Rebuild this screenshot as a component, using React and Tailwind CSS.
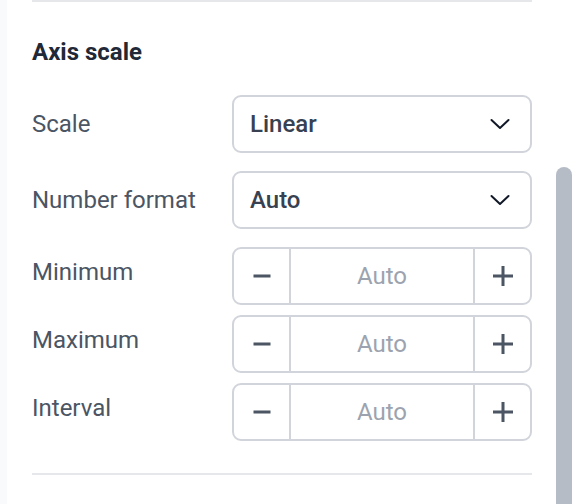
import React from "react";

function Chevron() {
  return (
    <svg width="20" height="12" viewBox="0 0 20 12" fill="none" className="shrink-0">
      <polyline points="1.5,2 10,10 18.5,2" stroke="#111827" strokeWidth="2" strokeLinecap="round" strokeLinejoin="round" />
    </svg>
  );
}

function Select({ value }) {
  return (
    <div className="flex h-[58px] w-[300px] items-center justify-between rounded-[9px] border-2 border-[#d1d5db] bg-white pl-[16px] pr-[20px]">
      <span className="text-[24px] font-medium leading-[36px] text-[#374151]">{value}</span>
      <Chevron />
    </div>
  );
}

function Stepper() {
  return (
    <div className="flex h-[58px] w-[300px] rounded-[9px] border-2 border-[#d1d5db] bg-white">
      <div className="flex w-[57px] items-center justify-center border-r-2 border-[#d1d5db]">
        <svg width="18" height="4" viewBox="0 0 18 4">
          <rect x="0.5" y="0.5" width="17" height="3" fill="#4b5563" />
        </svg>
      </div>
      <div className="flex flex-1 items-center justify-center text-[24px] leading-[36px] text-[#9ca3af]">Auto</div>
      <div className="flex w-[57px] items-center justify-center border-l-2 border-[#d1d5db]">
        <svg width="20" height="20" viewBox="0 0 20 20">
          <rect x="0" y="8.5" width="20" height="3" fill="#4b5563" />
          <rect x="8.5" y="0" width="3" height="20" fill="#4b5563" />
        </svg>
      </div>
    </div>
  );
}

function Row({ label, children, top }) {
  return (
    <div className={top ? "flex items-start" : "flex items-center"}>
      <div className={"w-[200px] text-[24px] leading-[36px] text-[#4b5563] " + (top ? "pt-[7px]" : "")}>{label}</div>
      {children}
    </div>
  );
}

export default function App() {
  return (
    <div className="flex h-[504px] w-[580px] overflow-hidden bg-white" style={{ fontFamily: "Roboto, 'Liberation Sans', sans-serif" }}>
      <div className="h-full w-[7px] bg-[#f9fafb]" />
      <div className="ml-[25px] flex w-[500px] flex-col">
        <div className="h-[2px] bg-[#e5e7eb]" />
        <h2 className="mt-[32px] text-[24px] font-bold leading-[36px] text-[#1f2937]">Axis scale</h2>
        <div className="mt-[25px] flex flex-col">
          <Row label="Scale"><Select value="Linear" /></Row>
          <div className="mt-[18px]"><Row label="Number format"><Select value="Auto" /></Row></div>
          <div className="mt-[18px]"><Row label="Minimum" top><Stepper /></Row></div>
          <div className="mt-[10px]"><Row label="Maximum" top><Stepper /></Row></div>
          <div className="mt-[10px]"><Row label="Interval" top><Stepper /></Row></div>
        </div>
        <div className="mt-[32px] h-[2px] bg-[#e5e7eb]" />
      </div>
      <div className="ml-[24px] w-[16px] pt-[167px]">
        <div className="h-[400px] w-[16px] rounded-t-full bg-[#b6bcc6]" />
      </div>
    </div>
  );
}
